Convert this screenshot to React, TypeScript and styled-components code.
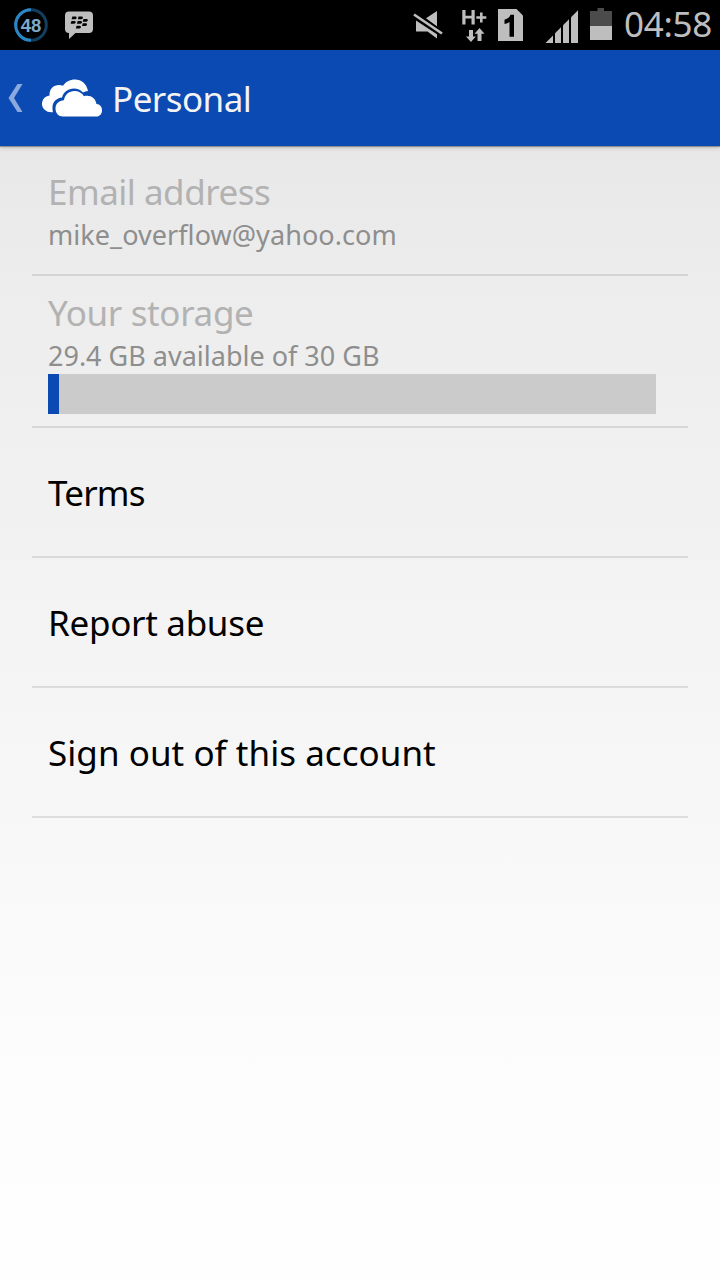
import React from "react";
import styled, { createGlobalStyle } from "styled-components";

const GlobalStyle = createGlobalStyle`
  * { box-sizing: border-box; }
  body { margin: 0; background: #fff; }
`;

const Screen = styled.div`
  width: 720px;
  height: 1280px;
  display: flex;
  flex-direction: column;
  overflow: hidden;
  font-family: "Noto Sans", sans-serif;
`;

const StatusBar = styled.header`
  height: 50px;
  flex: none;
  display: flex;
  background: #000;
`;

const StatusIcons = styled.svg`
  flex: none;
  display: block;
`;

const Spacer = styled.div`
  flex: 1;
`;

const Clock = styled.time`
  width: 96px;
  height: 50px;
  color: #bebebe;
  font-size: 35px;
  line-height: 47px;
  letter-spacing: -0.3px;
  white-space: nowrap;
`;

const ActionBar = styled.nav`
  height: 96px;
  flex: none;
  display: flex;
  background: #0a4ab2;
  position: relative;
  box-shadow: 0 1px 1px rgba(0, 0, 0, 0.3), 0 2px 5px rgba(0, 0, 0, 0.16);
`;

const Heading = styled.h1`
  margin: 25px 0 0;
  color: #f3f3f3;
  font-size: 35px;
  font-weight: 400;
  line-height: 48px;
  letter-spacing: -0.55px;
  white-space: nowrap;
`;

const Content = styled.main`
  flex: 1;
  padding: 0 32px;
  background: linear-gradient(
    #e8e8e8,
    #ededed 13%,
    #f1f1f1 31%,
    #f7f7f7 57%,
    #fcfcfc 80%,
    #fefefe 95%
  );
`;

const Row = styled.section<{ $height: number; $top: number }>`
  height: ${(p) => p.$height}px;
  padding: ${(p) => p.$top}px 32px 0 16px;
  border-bottom: 2px solid rgba(0, 0, 0, 0.1);
`;

const Title = styled.div<{ $muted?: boolean; $spacing?: number }>`
  color: ${(p) => (p.$muted ? "#b2b2b2" : "#000")};
  font-size: 35px;
  line-height: 48px;
  letter-spacing: ${(p) => p.$spacing ?? 0}px;
  white-space: nowrap;
`;

const Detail = styled.div<{ $spacing?: number }>`
  margin-top: 1px;
  color: #8e8e8e;
  font-size: 27px;
  line-height: 36px;
  letter-spacing: ${(p) => p.$spacing ?? 0}px;
  white-space: nowrap;
`;

const Meter = styled.div`
  height: 40px;
  background: #cbcbcb;
`;

const MeterFill = styled.div`
  width: 11px;
  height: 100%;
  background: #0a4ab2;
`;

const IconText = styled.text`
  font-family: "Liberation Sans", sans-serif;
  font-weight: 700;
`;

const bubbleMarks = [
  [72, 16.5],
  [78.2, 16.5],
  [71, 21],
  [77.3, 21],
  [83.1, 19],
  [82.4, 23.3],
  [76.2, 25.8],
];

function NotificationIcons() {
  return (
    <StatusIcons width="110" height="50" viewBox="0 0 110 50">
      <circle cx="31" cy="25" r="15.3" fill="none" stroke="#123e60" strokeWidth="3" />
      <path d="M31 9.7a15.3 15.3 0 1 0 0 30.6" fill="none" stroke="#2b86c5" strokeWidth="3" />
      <IconText x="31" y="31.7" textAnchor="middle" fontSize="18.5" fill="#7eaacb">48</IconText>
      <path d="M69 11.5h20q4 0 4 4V29q0 4-4 4H75.5L69 39v-6q-4 0-4-4V15.500q0-4 4-4Z" fill="#bebebe" />
      {bubbleMarks.map(([x, y]) => (
        <path key={`${x}-${y}`} d={`M${x + 0.4} ${y}h3q1.500 0 1.200 1.400-.4 1.400-1.700 1.400h-3.300Z`} fill="#000" />
      ))}
    </StatusIcons>
  );
}

function SystemIcons() {
  return (
    <StatusIcons width="224" height="50" viewBox="400 0 224 50" fill="#bebebe">
      <path d="M437 11v15.500l-11-8.300Z" />
      <path d="M416 20.500l21 13.800V38.500l-9.500-7H416Z" />
      <path d="M414 14.500l28 19" stroke="#000" strokeWidth="6" />
      <path d="M414 14.500l28 19" stroke="#bebebe" strokeWidth="2.700" />
      <path d="M462.300 10h3.200v5.700h6V10h3.200v14.500h-3.200v-6h-6v6h-3.200Z" />
      <path d="M480 12.500h2.600v3.700h3.700v2.600h-3.700v3.700H480v-3.700h-3.700v-2.600h3.700Z" />
      <path d="M469 30h4v6.500h2.800L471 42l-5-5.500h3Z" />
      <path d="M479.500 28l5 5.800H481.500V41h-4v-7.200h-3Z" />
      <path d="M498 9h18.500l6.500 6.500V41h-25Z" />
      <path d="M514 14.800v22h-4.500V22q-2 1.500-5 2v-4.200q4.500-1 6-5Z" fill="#000" />
      <path d="M545.500 43l7.500-7.500V43Z" />
      <path d="M555 33.200l6-6V43h-6Z" />
      <path d="M563 25.200l6-6V43h-6Z" />
      <path d="M571 17.200l7-7V43h-7Z" />
      <path d="M597.500 8h6.500v3h8v15h-22V11h7.500Z" fill="#4b4b4b" />
      <path d="M590 26h22v14h-22Z" />
    </StatusIcons>
  );
}

function BackAndLogo() {
  return (
    <StatusIcons width="112" height="96" viewBox="0 50 112 96">
      <path d="M17.500 84h5L14 98l8.500 14h-5L8.500 98Z" fill="#8ba9dc" />
      <path d="M53 112.300h-1.500C46 112.300 42 108.500 42 104c0-4.500 3-7.700 7.500-8.500C49.200 89 53.500 85 59 85c1.500 0 2.700.3 4 .8C65.300 81.800 70 79.500 75 79.500c6.500 0 11.600 4.200 13 11.500-2 .2-3.500.8-5 1.600C80.600 90 77.500 88.500 74 88.500c-6 0-10.500 3.500-12 9-5.500.5-9.500 4.500-9.500 9.500 0 2 0 3.700.5 5.300Z" fill="#fff" />
      <path d="M63 116.500c-4.500 0-7.500-3.500-7.500-8 0-4.700 3.500-8 8.500-8.200C64.700 94.700 69 91 74.500 91c4.200 0 7.500 2 9.500 5.300 6-1.800 11.500 1.500 12.500 7.700 3.500.3 5.500 2.700 5.500 6.200 0 4-2.500 6.300-6 6.300Z" fill="#fff" />
    </StatusIcons>
  );
}

export default function App() {
  return (
    <Screen>
      <GlobalStyle />
      <StatusBar>
        <NotificationIcons />
        <Spacer />
        <SystemIcons />
        <Clock>04:58</Clock>
      </StatusBar>
      <ActionBar>
        <BackAndLogo />
        <Heading>Personal</Heading>
      </ActionBar>
      <Content>
        <Row $height={130} $top={22}>
          <Title $muted $spacing={-0.5}>Email address</Title>
          <Detail $spacing={0.06}>mike_overflow@yahoo.com</Detail>
        </Row>
        <Row $height={152} $top={13}>
          <Title $muted $spacing={-0.35}>Your storage</Title>
          <Detail>29.4 GB available of 30 GB</Detail>
          <Meter>
            <MeterFill />
          </Meter>
        </Row>
        <Row $height={130} $top={41}>
          <Title $spacing={-0.8}>Terms</Title>
        </Row>
        <Row $height={130} $top={41}>
          <Title $spacing={-0.3}>Report abuse</Title>
        </Row>
        <Row $height={130} $top={41}>
          <Title $spacing={0.04}>Sign out of this account</Title>
        </Row>
      </Content>
    </Screen>
  );
}
